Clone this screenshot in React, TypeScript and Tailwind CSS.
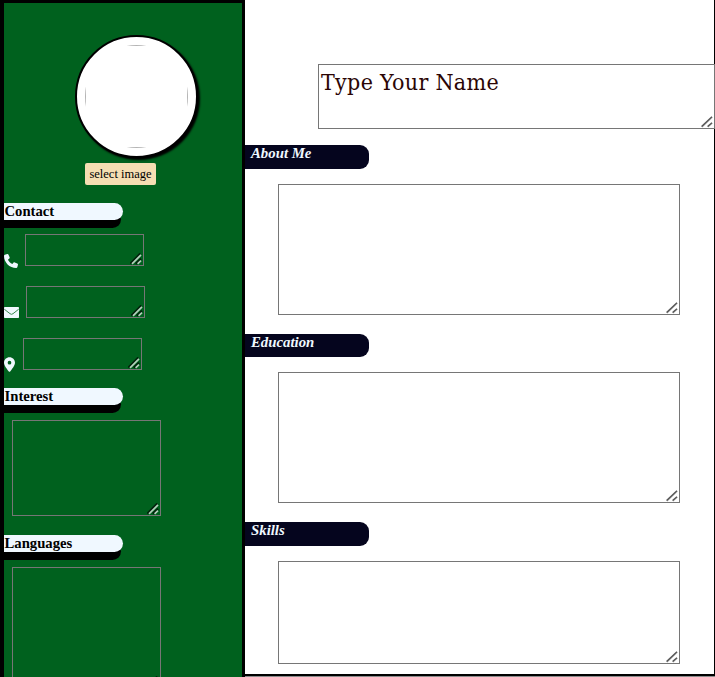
import type { ReactNode } from "react";
import { FaLocationDot, FaPhone } from "react-icons/fa6";

function SideHeading({ children }: { children: ReactNode }) {
  return (
    <h4 className="h-[17px] w-[119px] rounded-r-[9px] bg-[#f0f8ff] pl-[0.5px] text-[14.7px] leading-[17px] font-bold text-black shadow-[-2px_8px_0_#000]">
      {children}
    </h4>
  );
}

function MainHeading({ children, size = "h-6" }: { children: ReactNode; size?: string }) {
  return (
    <h4
      className={`${size} w-[124px] rounded-r-[9px] bg-[#05051e] pl-1.5 text-[14.8px] leading-[17px] font-bold text-[#f0f8ff] italic`}
    >
      {children}
    </h4>
  );
}

// Textarea with its own resize grip in the lower right corner.
function Field({ box, text = "", value, dark = false }: { box: string; text?: string; value?: string; dark?: boolean }) {
  return (
    <div className={`relative shrink-0 ${box}`}>
      <textarea
        className={`block h-full w-full resize-none overflow-hidden border border-[#767676] bg-transparent p-0.5 outline-none ${text}`}
        defaultValue={value}
      />
      <svg className="pointer-events-none absolute right-[2px] bottom-[1px] h-3 w-3" viewBox="0 0 12 12" fill="none">
        {dark ? (
          <>
            <path d="M0.3 10.5L10.3 0.5M5.8 10.8L11 5.8" stroke="#02200b" strokeWidth="2" />
            <path d="M2 10.9L11 1.9M7.6 10.9L11 7.7" stroke="#b3d0bb" strokeWidth="1.7" />
          </>
        ) : (
          <>
            <path d="M1.4 11.2L11.6 1.6M7.2 11.2L11.6 7.4" stroke="#d4d4d4" strokeWidth="1" />
            <path d="M0.6 10.6L11 0.8M6.6 10.6L11 6.8" stroke="#575757" strokeWidth="1.5" />
          </>
        )}
      </svg>
    </div>
  );
}

function Envelope() {
  return (
    <svg className="mt-[21px] h-[11px] w-[15px] shrink-0" viewBox="0 0 15 11" fill="none">
      <rect width="15" height="11" rx="0.8" fill="#f0f8ff" />
      <path d="M0.3 2.2L6 6.7Q7.5 7.9 9 6.7L14.7 2.2" stroke="#3d8a54" strokeWidth="1" />
    </svg>
  );
}

export default function App() {
  return (
    <div className="flex h-[677px] w-[715px] overflow-hidden bg-white font-['Liberation_Serif',serif]">
      <aside className="h-[677px] w-[245px] shrink-0 overflow-hidden border-t-[3px] border-r-[3px] border-l-4 border-black bg-[#00611e]">
        <div className="mt-8 ml-[71px] h-[123px] w-[123px] rounded-full border-2 border-black bg-white p-2 shadow-[2px_2px_2px_#000]">
          <div className="h-[103px] w-[103px] overflow-hidden rounded-full">
            <div className="h-full w-full border border-[#b4b4b4]" />
          </div>
        </div>
        <button className="mt-[5px] ml-[81px] block h-[22px] w-[71px] rounded-[2px] bg-[#f5deb3] text-center text-[12.5px] leading-[22px] whitespace-nowrap text-black">
          select image
        </button>

        <div className="mt-[18px]">
          <SideHeading>Contact</SideHeading>
        </div>
        <div className="mt-[14px] flex h-8">
          <FaPhone className="mt-5 h-[14px] w-[14px] shrink-0 text-[#f0f8ff]" />
          <Field dark box="ml-[7px] h-8 w-[119px]" />
        </div>
        <div className="mt-5 flex h-8">
          <Envelope />
          <Field dark box="ml-[7px] h-8 w-[119px]" />
        </div>
        <div className="mt-5 flex h-8">
          <FaLocationDot className="mt-[19px] h-[15px] w-[11px] shrink-0 text-[#f0f8ff]" />
          <Field dark box="ml-2 h-8 w-[119px]" />
        </div>

        <div className="mt-[18px]">
          <SideHeading>Interest</SideHeading>
        </div>
        <Field dark box="mt-[15px] ml-2 h-24 w-[149px]" />
        <div className="mt-[19px]">
          <SideHeading>Languages</SideHeading>
        </div>
        <Field dark box="mt-[15px] ml-2 h-[122px] w-[149px]" />
      </aside>

      <div className="flex h-[677px] w-[470px] flex-col bg-[#8c8c8c]">
        <main className="h-[676px] w-[470px] border-r border-b-2 border-black bg-white">
          <Field
            box="mt-16 ml-[73px] h-[65px] w-[397px] bg-white"
            text="font-['DejaVu_Serif_Condensed','DejaVu_Serif',serif] text-[23px] leading-[30px] tracking-[0.3px] text-[#2b0505]"
            value="Type Your Name"
          />
          <div className="mt-4">
            <MainHeading>About Me</MainHeading>
          </div>
          <Field box="mt-[15px] ml-[33px] h-[131px] w-[402px]" />
          <div className="mt-[19px]">
            <MainHeading size="h-[23px]">Education</MainHeading>
          </div>
          <Field box="mt-[15px] ml-[33px] h-[131px] w-[402px]" />
          <div className="mt-[19px]">
            <MainHeading>Skills</MainHeading>
          </div>
          <Field box="mt-[15px] ml-[33px] h-[103px] w-[402px]" />
        </main>
      </div>
    </div>
  );
}
